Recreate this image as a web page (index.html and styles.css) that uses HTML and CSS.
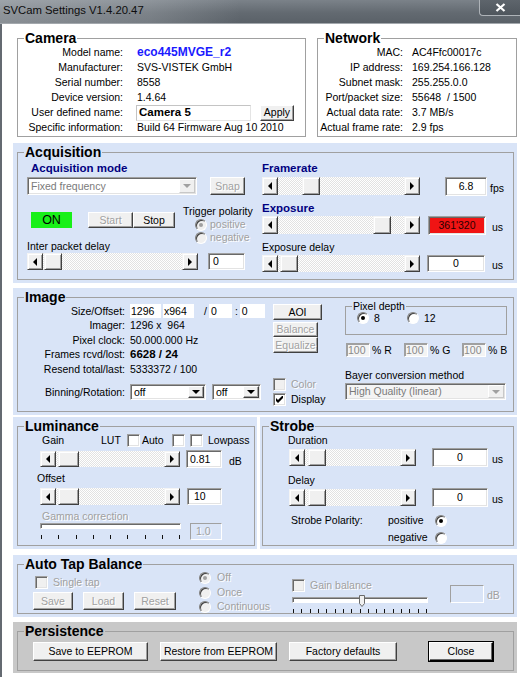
FILE: index.html
```html
<!DOCTYPE html>
<html lang="en">
<head>
<meta charset="utf-8">
<title>SVCam Settings</title>
<link rel="stylesheet" href="styles.css">
</head>
<body>
<div class="window">
  <div class="titlebar">
    <span class="title">SVCam Settings V1.4.20.47</span>
    <div class="close-x">
      <svg width="11" height="9" viewBox="0 0 11 9"><path d="M1.5 1 L9.5 8 M9.5 1 L1.5 8" stroke="#fff" stroke-width="2.2"/></svg>
    </div>
  </div>
  <div class="client">
    <div class="toprow">
      <fieldset class="grp cam">
        <legend>Camera</legend>
        <div class="kv cam-kv">
          <span class="k">Model name:</span><span class="v model">eco445MVGE_r2</span>
          <span class="k">Manufacturer:</span><span class="v">SVS-VISTEK GmbH</span>
          <span class="k">Serial number:</span><span class="v">8558</span>
          <span class="k">Device version:</span><span class="v">1.4.64</span>
          <span class="k">User defined name:</span>
          <span class="v userrow"><span class="edit flat name">Camera 5</span><span class="btn apply">Apply</span></span>
          <span class="k">Specific information:</span><span class="v">Build 64 Firmware Aug 10 2010</span>
        </div>
      </fieldset>
      <fieldset class="grp net">
        <legend>Network</legend>
        <div class="kv net-kv">
          <span class="k">MAC:</span><span class="v">AC4Ffc00017c</span>
          <span class="k">IP address:</span><span class="v">169.254.166.128</span>
          <span class="k">Subnet mask:</span><span class="v">255.255.0.0</span>
          <span class="k">Port/packet size:</span><span class="v">55648 &nbsp;/ 1500</span>
          <span class="k">Actual data rate:</span><span class="v">3.7 MB/s</span>
          <span class="k">Actual frame rate:</span><span class="v">2.9 fps</span>
        </div>
      </fieldset>
    </div>

    <div class="panel acq-panel">
      <fieldset class="grp">
        <legend>Acquisition</legend>
        <div class="acq">
          <div class="acq-left">
            <div class="navh mode-h">Acquisition mode</div>
            <div class="row r-mode">
              <div class="combo dis mode-c"><span class="ctext">Fixed frequency</span><span class="cbtn"><i class="dn"></i></span></div>
              <span class="btn dis snap">Snap</span>
            </div>
            <div class="trig-grid">
              <div class="onrow">
                <span class="on-ind">ON</span>
                <span class="btn dis start">Start</span>
                <span class="btn stop">Stop</span>
              </div>
              <div class="trig">
                <div class="trig-t">Trigger polarity</div>
                <div class="ropt dis"><span class="rb dis on"></span><span>positive</span></div>
                <div class="ropt dis"><span class="rb dis"></span><span>negative</span></div>
              </div>
              <div class="ipd">Inter packet delay</div>
            </div>
            <div class="row r-ipd">
              <div class="sb sb-ipd"><span class="sbb"><i class="lt"></i></span><span class="sbt"><span class="thumb" style="margin-left:1px"></span></span><span class="sbb"><i class="rt"></i></span></div>
              <span class="edit ipd-e">0</span>
            </div>
          </div>
          <div class="acq-right">
            <div class="navh fr-h">Framerate</div>
            <div class="row r-fr">
              <div class="sb sb-r tall"><span class="sbb"><i class="lt"></i></span><span class="sbt"><span class="thumb" style="margin-left:24px"></span></span><span class="sbb"><i class="rt"></i></span></div>
              <span class="edit fr-e">6.8</span>
              <span class="unit fps">fps</span>
            </div>
            <div class="navh exp-h">Exposure</div>
            <div class="row r-fr">
              <div class="sb sb-r tall"><span class="sbb"><i class="lt"></i></span><span class="sbt"><span class="thumb" style="margin-left:95px"></span></span><span class="sbb"><i class="rt"></i></span></div>
              <span class="edit exp-e">361'320</span>
              <span class="unit us-a">us</span>
            </div>
            <div class="expd-h">Exposure delay</div>
            <div class="row r-expd">
              <div class="sb sb-r"><span class="sbb"><i class="lt"></i></span><span class="sbt"><span class="thumb" style="margin-left:2px"></span></span><span class="sbb"><i class="rt"></i></span></div>
              <span class="edit expd-e">0</span>
              <span class="unit us-b">us</span>
            </div>
          </div>
        </div>
      </fieldset>
    </div>

    <div class="panel img-panel">
      <fieldset class="grp">
        <legend>Image</legend>
        <div class="img">
          <div class="img-l">
            <div class="irows">
              <span class="k">Size/Offset:</span>
              <span class="sizes"><span class="wbox w1">1296</span><span class="wbox w2">x964</span><span class="slash">/</span><span class="wbox w3">0</span><span class="colon">:</span><span class="wbox w4">0</span></span>
              <span class="k">Imager:</span><span class="v">1296 x&nbsp; 964</span>
              <span class="k">Pixel clock:</span><span class="v">50.000.000 Hz</span>
              <span class="k">Frames rcvd/lost:</span><span class="v bold">6628 / 24</span>
              <span class="k">Resend total/last:</span><span class="v">5333372 / 100</span>
            </div>
            <div class="irows binrow">
              <span class="k">Binning/Rotation:</span>
              <span class="row">
                <span class="combo bin1"><span class="ctext">off</span><span class="cbtn"><i class="dn"></i></span></span>
                <span class="combo bin2"><span class="ctext">off</span><span class="cbtn"><i class="dn"></i></span></span>
              </span>
            </div>
          </div>
          <div class="img-m">
            <span class="btn aoi">AOI</span>
            <span class="btn dis bal">Balance</span>
            <span class="btn dis equ">Equalize</span>
            <div class="cbrow color-row dis"><span class="cb dis"></span><span class="cbl">Color</span></div>
            <div class="cbrow disp-row"><span class="cb"><svg width="7" height="7" viewBox="0 0 7 7"><path d="M0 2 L2 4 L7 -1 V2 L2 7 L0 5 Z" fill="#000"/></svg></span><span class="cbl">Display</span></div>
          </div>
          <div class="img-r">
            <fieldset class="grp pd">
              <legend>Pixel depth</legend>
              <div class="pd-row">
                <div class="pd-opt"><span class="rb on"></span><span>8</span></div>
                <div class="pd-opt"><span class="rb"></span><span>12</span></div>
              </div>
            </fieldset>
            <div class="row pct-row">
              <span class="pct"><span class="edit dl pe">100</span><span class="pt">% R</span></span>
              <span class="pct"><span class="edit dl pe">100</span><span class="pt">% G</span></span>
              <span class="pct"><span class="edit dl pe">100</span><span class="pt">% B</span></span>
            </div>
            <div class="bayer-h">Bayer conversion method</div>
            <div class="combo dis bayer"><span class="ctext">High Quality (linear)</span><span class="cbtn"><i class="dn"></i></span></div>
          </div>
        </div>
      </fieldset>
    </div>

    <div class="ls">
      <div class="panel lum-panel">
        <fieldset class="grp">
          <legend>Luminance</legend>
          <div class="lum">
            <div class="row gain-row">
              <span class="gain-l">Gain</span>
              <span class="lut-l">LUT</span>
              <span class="cb"></span>
              <span class="auto-l">Auto</span>
              <span class="cb"></span>
              <span class="cb lp-cb"></span>
              <span class="lp-l">Lowpass</span>
            </div>
            <div class="row lrow1">
              <div class="sb sb-l sb16"><span class="sbb"><i class="lt"></i></span><span class="sbt"><span class="thumb wide" style="margin-left:2px"></span></span><span class="sbb"><i class="rt"></i></span></div>
              <span class="edit gain-e">0.81</span>
              <span class="unit db-u">dB</span>
            </div>
            <div class="off-h">Offset</div>
            <div class="row lrow2">
              <div class="sb sb-l"><span class="sbb"><i class="lt"></i></span><span class="sbt"><span class="thumb wide" style="margin-left:2px"></span></span><span class="sbb"><i class="rt"></i></span></div>
              <span class="edit off-e">10</span>
            </div>
            <div class="gam-h">Gamma correction</div>
            <div class="row gam-row">
              <div class="gslider">
                <div class="track"></div>
                <div class="ticks"><i></i><i></i><i></i><i></i><i></i><i></i><i></i><i></i><i></i></div>
              </div>
              <span class="edit dis gam-e">1.0</span>
            </div>
          </div>
        </fieldset>
      </div>
      <div class="panel str-panel">
        <fieldset class="grp">
          <legend>Strobe</legend>
          <div class="str">
            <div class="sh">Duration</div>
            <div class="row srow">
              <div class="sb sb-s"><span class="sbb"><i class="lt"></i></span><span class="sbt"><span class="thumb" style="margin-left:3px"></span></span><span class="sbb"><i class="rt"></i></span></div>
              <span class="edit s-e">0</span>
              <span class="unit s-u">us</span>
            </div>
            <div class="sh delay-h">Delay</div>
            <div class="row srow">
              <div class="sb sb-s"><span class="sbb"><i class="lt"></i></span><span class="sbt"><span class="thumb" style="margin-left:3px"></span></span><span class="sbb"><i class="rt"></i></span></div>
              <span class="edit s-e">0</span>
              <span class="unit s-u">us</span>
            </div>
            <div class="row pol-row">
              <span class="pol-l">Strobe Polarity:</span>
              <span class="pol-v">positive</span>
              <span class="rb on"></span>
            </div>
            <div class="row pol-row pol2">
              <span class="pol-sp"></span>
              <span class="pol-v">negative</span>
              <span class="rb"></span>
            </div>
          </div>
        </fieldset>
      </div>
    </div>

    <div class="panel atb-panel">
      <fieldset class="grp">
        <legend>Auto Tap Balance</legend>
        <div class="atb">
          <div class="atb-a">
            <div class="cbrow st-row dis"><span class="cb dis"></span><span class="cbl">Single tap</span></div>
            <div class="row atb-btns">
              <span class="btn dis b-save">Save</span>
              <span class="btn dis b-load">Load</span>
              <span class="btn dis b-reset">Reset</span>
            </div>
          </div>
          <div class="atb-b">
            <div class="ropt2 dis"><span class="rb dis on"></span><span>Off</span></div>
            <div class="ropt2 dis r2"><span class="rb dis"></span><span>Once</span></div>
            <div class="ropt2 dis r3"><span class="rb dis"></span><span>Continuous</span></div>
          </div>
          <div class="atb-c">
            <div class="cbrow gb-row dis"><span class="cb dis"></span><span class="cbl">Gain balance</span></div>
            <div class="bslider">
              <div class="track"></div>
              <svg class="bthumb" width="6" height="12" viewBox="0 0 6 12"><path d="M0.5 0.5 H5.5 V8.5 L3 11.5 L0.5 8.5 Z" fill="#f0f0f0" stroke="#6a6a6a"/></svg>
              <div class="ticks"><i></i><i></i><i></i><i></i><i></i><i></i><i></i><i></i><i></i><i></i><i></i><i></i><i></i><i></i><i></i><i></i><i></i></div>
            </div>
          </div>
          <div class="atb-d">
            <span class="edit dis db-e"></span>
            <span class="dbl">dB</span>
          </div>
        </div>
      </fieldset>
    </div>

    <div class="panel per-panel">
      <fieldset class="grp">
        <legend>Persistence</legend>
        <div class="row per">
          <span class="btn pb p-save">Save to EEPROM</span>
          <span class="btn pb p-rest">Restore from EEPROM</span>
          <span class="btn pb p-fact">Factory defaults</span>
          <span class="btn pb p-close">Close</span>
        </div>
      </fieldset>
    </div>
  </div>
</div>
</body>
</html>
```
FILE: styles.css
```css
*{box-sizing:border-box}
html,body{margin:0;padding:0}
body{width:520px;height:677px;overflow:hidden;background:#fff;font-family:"Liberation Sans",Arial,Helvetica,sans-serif;font-size:10.5px;line-height:13px;color:#000}
.window{width:520px;height:677px;display:flex;flex-direction:column}

/* title bar */
.titlebar{flex:none;height:24px;display:flex;align-items:flex-start;border-bottom:1px solid #a3a8ad;
  background:linear-gradient(90deg,rgba(215,219,223,.38) 0,rgba(215,219,223,.22) 150px,rgba(215,219,223,0) 240px),linear-gradient(#7b8289,#636a71 55%,#5a6168)}
.title{padding:3px 0 0 3px;font-size:11.3px;line-height:14px;color:#0d0d0d;white-space:nowrap}
.close-x{margin-left:auto;width:41px;height:16px;flex:none;display:flex;align-items:center;justify-content:center;border:1px solid #aeb3b8;border-top:0;border-right:0;border-radius:0 0 0 4px;background:linear-gradient(#5e656c,#4f565d)}

.client{flex:1;border-left:2px solid #646a71;padding:7px 0 0 11px}

/* group boxes */
.grp{margin:0;padding:0;border:1px solid #a0a0a0;min-width:0}
.grp>legend{margin-left:6px;padding:0 1px;font-weight:bold;font-size:14px;line-height:14px;white-space:nowrap}

.toprow{display:flex}
.cam{margin-left:4px;width:289px}
.net{margin-left:11px;width:200px}
.kv{display:grid;grid-auto-rows:15px;align-items:center;padding-bottom:1px;white-space:nowrap}
.cam-kv{grid-template-columns:105px 1fr;column-gap:14px}
.net-kv{grid-template-columns:85px 1fr;column-gap:9px}
.k{text-align:right;white-space:nowrap}
.v{white-space:nowrap}
.bold{font-weight:bold;font-size:11.5px}
.model{color:#1a1aff;font-weight:bold;font-size:12px}
.userrow{display:flex;align-items:center;margin-left:-1px}

/* controls */
.edit{display:flex;align-items:center;height:17px;background:#fff;border:1px solid;border-color:#a0a0a0 #fff #fff #a0a0a0;box-shadow:inset 1px 1px #696969,inset -1px -1px #e3e3e3;padding:0 3px;white-space:nowrap;flex:none}
.edit.flat{border-color:#c4c4c4 #e4e4e4 #e4e4e4 #c4c4c4;box-shadow:none}
.edit.dis{background:transparent;color:#a0a0a0;text-shadow:1px 1px #fff;border-color:#a0a0a0 #fff #fff #a0a0a0;box-shadow:none}
.edit.dl{background:#f4f4f4;color:#8a8a8a;box-shadow:inset 1px 1px #a0a0a0}
.name{width:115px;height:16px;font-weight:bold;font-size:11.5px;padding-left:2px}
.btn{display:flex;align-items:center;justify-content:center;flex:none;height:16px;background:#f0f0f0;border:1px solid;border-color:#fff #404040 #404040 #fff;box-shadow:inset -1px -1px #a0a0a0;white-space:nowrap}
.btn.dis{color:#a0a0a0;text-shadow:1px 1px #fff}
.apply{margin-left:9px;width:34px}

.combo{display:flex;align-items:center;height:18px;background:#fff;border:1px solid;border-color:#a0a0a0 #fff #fff #a0a0a0;box-shadow:inset 1px 1px #696969,inset -1px -1px #e3e3e3;padding:1px;flex:none}
.ctext{flex:1;padding-left:2px;white-space:nowrap;overflow:hidden}
.combo.dis .ctext{color:#7a7a7a}
.cbtn{width:16px;height:100%;flex:none;display:flex;align-items:center;justify-content:center;background:#f0f0f0;border:1px solid;border-color:#fff #404040 #404040 #fff;box-shadow:inset -1px -1px #a0a0a0}
.combo.dis .cbtn{border-color:#fff #c8c8c8 #c8c8c8 #fff;box-shadow:none}
.dn{width:0;height:0;border-left:4px solid transparent;border-right:4px solid transparent;border-top:4px solid #000}
.combo.dis .dn{border-top-color:#a0a0a0}

.sb{display:flex;height:17px;flex:none}
.sb.tall{height:18px}
.sb16{height:16px}
.sbb{width:16px;flex:none;display:flex;align-items:center;justify-content:center;background:#f0f0f0;border:1px solid;border-color:#f4f4f4 #404040 #404040 #f4f4f4;box-shadow:inset 1px 1px #fff,inset -1px -1px #a0a0a0}
.sbt{flex:1;display:flex;background:repeating-conic-gradient(#fff 0 25%,#e2e2e2 0 50%) 0 0/2px 2px}
.thumb{width:18px;flex:none;background:#f0f0f0;border:1px solid;border-color:#f4f4f4 #404040 #404040 #f4f4f4;box-shadow:inset 1px 1px #fff,inset -1px -1px #a0a0a0}
.thumb.wide{width:21px}
.lt{width:0;height:0;border-top:4px solid transparent;border-bottom:4px solid transparent;border-right:4px solid #000}
.rt{width:0;height:0;border-top:4px solid transparent;border-bottom:4px solid transparent;border-left:4px solid #000}

.rb{width:12px;height:12px;flex:none;border-radius:50%;background:#fff;border:1px solid;border-color:#808080 #fff #fff #808080;box-shadow:inset 1px 1px #404040;display:flex;align-items:center;justify-content:center}
.rb.on::after{content:"";width:4px;height:4px;border-radius:50%;background:#000}
.rb.dis{background:#f0f0f0}
.rb.dis.on::after{background:#a0a0a0}

.cb{width:13px;height:13px;flex:none;background:#fff;border:1px solid;border-color:#a0a0a0 #fff #fff #a0a0a0;box-shadow:inset 1px 1px #696969,inset -1px -1px #e3e3e3;display:flex;align-items:center;justify-content:center}
.cb.dis{background:#f0f0f0}
.cbrow{display:flex;align-items:center;height:13px;white-space:nowrap}
.cbl{margin-left:5px}
.dis .cbl,.ropt.dis,.ropt2.dis{color:#a0a0a0;text-shadow:1px 1px #fff}

.row{display:flex;align-items:center}
.unit{padding-top:4px;flex:none}

/* panels */
.panel{background:#d9e4f7;padding:2px 3px 3px 4px}
.acq-panel{margin-top:6px;width:504px}

/* acquisition */
.acq{display:grid;grid-template-columns:235px 1fr;padding:0 0 7px 9px}
.navh{color:#000080;font-weight:bold;font-size:11.5px;white-space:nowrap}
.mode-h{line-height:18px;padding-left:4px}
.r-mode{height:18px}
.mode-c{width:170px}
.snap{margin-left:13px;width:35px;height:18px}
.trig-grid{display:grid;grid-template-columns:156px auto;grid-template-rows:7px 16px 12px 13px;margin-top:10px}
.onrow{grid-column:1;grid-row:2;display:flex}
.on-ind{margin-left:4px;width:41px;height:16px;background:#18f018;display:flex;align-items:center;justify-content:center;font-size:12.5px}
.start{margin-left:16px;width:45px}
.stop{width:42px}
.trig{grid-column:2;grid-row:1/5;white-space:nowrap}
.trig-t{line-height:13px}
.ropt{display:flex;align-items:center;height:13px;margin-left:12px;gap:3px}
.ipd{grid-column:1;grid-row:4;line-height:13px;white-space:nowrap}
.r-ipd{height:17px}
.sb-ipd{width:171px}
.ipd-e{margin-left:10px;width:37px;padding-left:4px}

.fr-h{line-height:18px}
.r-fr{height:18px}
.sb-r{width:158px}
.fr-e{margin-left:25px;width:42px;height:19px;justify-content:center}
.fps{margin-left:3px}
.exp-h{margin-top:5px;line-height:16px}
.exp-e{margin-left:8px;width:58px;height:19px;justify-content:center;background:#f01414;color:#2a0000}
.us-a{margin-left:6px}
.expd-h{margin-top:6px;line-height:14px;white-space:nowrap}
.r-expd{margin-top:1px;height:17px}
.expd-e{margin-left:7px;width:58px;justify-content:center}
.us-b{margin-left:7px}

/* image */
.img-panel{margin-top:5px;width:504px}
.img{display:flex;align-items:flex-start;padding-bottom:5px}
.img-l{width:255px;flex:none}
.img-m{width:72px;flex:none;display:flex;flex-direction:column;align-items:flex-start}
.img-r{width:162px;flex:none}
.irows{display:grid;grid-template-columns:107px 1fr;column-gap:5px;grid-template-rows:14px 15px 14px 15px 14px;align-items:center;white-space:nowrap}
.sizes{display:flex;align-items:center}
.wbox{background:#fff;height:14px;display:flex;align-items:center;padding-left:1px;flex:none}
.w1{width:31px}
.w2{width:31px;margin-left:2px}
.slash{margin-left:10px}
.w3{width:23px;margin-left:2px;padding-left:2px}
.colon{margin-left:3px}
.w4{width:25px;margin-left:2px;padding-left:2px}
.binrow{grid-template-rows:16px;margin-top:8px}
.bin1{width:76px;height:16px}
.bin2{width:49px;height:16px;margin-left:6px}
.aoi{width:49px;height:16px}
.bal{width:45px;height:15px;margin-top:2px}
.equ{width:45px;height:16px}
.color-row{margin-top:25px}
.disp-row{margin-top:2px}
.pd{margin-top:-4px;width:162px}
.pd>legend{font-weight:normal;font-size:10.5px;line-height:12px}
.pd-row{display:flex;height:12px;align-items:center;padding-left:11px;margin-bottom:10px}
.pd-opt{display:flex;align-items:center;width:50px;gap:5px}
.pct-row{margin-top:8px;height:14px}
.pct{width:58px;display:flex;align-items:center;flex:none}
.pe{width:24px;height:14px;margin-left:1px;padding-left:1px}
.pt{margin-left:2px;white-space:nowrap}
.bayer-h{margin-top:12px;line-height:12px;white-space:nowrap}
.bayer{margin-top:2px;width:161px;height:17px;background:#f4f4f4}

/* luminance / strobe */
.ls{display:flex;margin-top:2px}
.lum-panel{width:244px;padding:2px 2px 3px 4px}
.str-panel{width:257px;margin-left:3px;padding:2px 3px 3px 2px}
.lum{padding:0 0 5px 19px}
.gain-row{height:14px;white-space:nowrap}
.gain-l{width:64px;padding-left:5px;flex:none}
.lut-l{width:26px;flex:none}
.auto-l{width:32px;padding-left:2px;flex:none}
.lp-cb{margin-left:5px}
.lp-l{margin-left:5px}
.lrow1{margin-top:3px;height:18px}
.sb-l{margin-left:3px;width:140px}
.gain-e{margin-left:6px;width:36px;height:18px;padding-left:3px}
.db-u{margin-left:7px}
.off-h{margin-top:3px;line-height:14px}
.lrow2{margin-top:3px;height:17px}
.off-e{margin-left:7px;width:35px;padding-left:6px}
.gam-h{margin-top:4px;line-height:14px;padding-left:5px;color:#a0a0a0;text-shadow:1px 1px #fff;white-space:nowrap}
.gam-row{align-items:flex-start;height:17px}
.gslider{margin-left:3px;width:141px}
.track{height:6px;background:#fff;border:1px solid;border-color:#a0a0a0 #fff #fff #a0a0a0;box-shadow:inset 1px 1px #696969}
.ticks{display:flex;justify-content:space-between;height:4px;margin-top:6px;padding:0 1px}
.ticks i{width:1px;height:4px;background:#111}
.gam-e{margin-left:9px;width:32px;padding-left:5px}

.str{padding:0 0 1px 25px}
.sh{line-height:14px}
.srow{margin-top:1px;height:19px}
.sb-s{margin-left:1px;width:127px}
.s-e{margin-left:16px;width:56px;height:19px;justify-content:center}
.s-u{margin-left:4px}
.delay-h{margin-top:6px}
.pol-row{margin-top:7px;height:13px;white-space:nowrap}
.pol2{margin-top:4px}
.pol-l{margin-left:3px;width:97px;flex:none}
.pol-sp{width:100px;flex:none}
.pol-v{width:47px;flex:none}

/* auto tap balance */
.atb-panel{margin-top:6px;width:504px}
.atb{display:flex;align-items:flex-start}
.atb-a{margin-left:15px;width:143px;flex:none}
.st-row{margin-top:5px;padding-left:2px}
.atb-btns{margin-top:3px;height:18px}
.b-save{width:40px;height:18px}
.b-load{width:41px;height:18px;margin-left:10px}
.b-reset{width:42px;height:18px;margin-left:10px}
.atb-b{margin-left:23px;width:93px;flex:none}
.ropt2{display:flex;align-items:center;height:13px;gap:6px;white-space:nowrap}
.r2{margin-top:2px}
.r3{margin-top:1px}
.atb-c{width:136px;flex:none}
.gb-row{margin-top:8px}
.bslider{position:relative;margin-top:5px}
.bthumb{position:absolute;left:67px;top:-2px}
.atb-d{margin-left:22px;margin-top:14px;display:flex;align-items:center}
.db-e{width:34px;height:18px}
.dbl{margin-left:3px;padding-top:2px;color:#a0a0a0;text-shadow:1px 1px #fff}

/* persistence */
.per-panel{margin-top:5px;width:504px;background:#c8c8c8;padding-bottom:2px}
.per{margin-top:4px;padding-bottom:9px}
.pb{height:19px}
.p-save{margin-left:15px;width:115px}
.p-rest{margin-left:12px;width:117px}
.p-fact{margin-left:12px;width:108px}
.p-close{margin-left:32px;width:64px;border-color:#fff #000 #000 #fff;outline:1px solid #000;box-shadow:inset -1px -1px #696969}
```
